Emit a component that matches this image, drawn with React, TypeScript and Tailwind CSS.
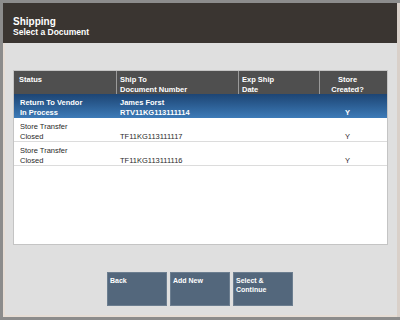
import React from 'react';

type Row = {
  status: [string, string];
  ship: [string, string];
  date: string;
  created: string;
};

const rows: Row[] = [
  { status: ['Return To Vendor', 'In Process'], ship: ['James Forst', 'RTV11KG113111114'], date: '', created: 'Y' },
  { status: ['Store Transfer', 'Closed'], ship: ['', 'TF11KG113111117'], date: '', created: 'Y' },
  { status: ['Store Transfer', 'Closed'], ship: ['', 'TF11KG113111116'], date: '', created: 'Y' },
];

const font = { fontFamily: '"Liberation Sans", Arial, sans-serif' };

function Cell({ lines, className = '' }: { lines: string[]; className?: string }) {
  return (
    <div className={`pt-[4px] leading-[10px] ${className}`}>
      {lines.map((l, i) => (
        <div key={i} className="h-[10px] whitespace-nowrap">
          {l}
        </div>
      ))}
    </div>
  );
}

function ActionButton({ label }: { label: string[] }) {
  return (
    <div className="w-[60px] h-[34px] bg-[#53677c] border border-[#6c7e90] px-[2px] pt-[3px] text-white text-[7px] font-bold leading-[9px]">
      {label.map((l, i) => (
        <div key={i}>{l}</div>
      ))}
    </div>
  );
}

export default function App() {
  return (
    <div className="w-[400px] h-[320px] bg-[#8c8c8c] pt-[3px] pl-[3px] pb-[3px] flex" style={font}>
      <div className="flex-1 flex flex-col bg-[#dfdfdf] border-r-[3px] border-[#d9d0c9]">
        <div className="h-[40px] bg-[#3a3531] pl-[10px] pt-[13px] text-white font-bold">
          <div className="text-[10px] leading-[11px]">Shipping</div>
          <div className="text-[8.5px] leading-[10px]">Select a Document</div>
        </div>

        <div className="flex-1 flex flex-col border-l-2 border-b-2 border-[#e6ddd5] pl-[8px] pr-[9px] pt-[27px]">
          <div className="h-[175px] bg-white border border-[#c4c4c4] flex flex-col text-[7.5px]">
            <div className="h-[23px] bg-[#4f4f4f] text-white font-bold flex shrink-0">
              <Cell lines={['Status']} className="w-[103px] pl-[5px] pt-[3px] border-r border-[#9a9a9a]" />
              <Cell lines={['Ship To', 'Document Number']} className="w-[122px] pl-[3px] pt-[3px] border-r border-[#9a9a9a]" />
              <Cell lines={['Exp Ship', 'Date']} className="w-[81px] pl-[3px] pt-[3px] border-r border-[#9a9a9a]" />
              <Cell lines={['Store', 'Created?']} className="flex-1 text-center pr-[12px] pt-[3px]" />
            </div>
            {rows.map((r, i) => {
              const selected = i === 0;
              return (
                <div
                  key={i}
                  className={`h-[24px] flex shrink-0 ${
                    selected
                      ? 'bg-gradient-to-b from-[#1d4574] to-[#3d7bb8] text-white font-bold'
                      : 'text-[#2a2a2a] border-b border-[#dcdcdc]'
                  }`}
                >
                  <Cell lines={r.status} className="w-[103px] pl-[6px]" />
                  <Cell lines={r.ship} className="w-[122px] pl-[3px]" />
                  <Cell lines={['', r.date]} className="w-[81px] pl-[3px]" />
                  <Cell lines={['', r.created]} className="flex-1 text-center pr-[12px]" />
                </div>
              );
            })}
          </div>

          <div className="flex justify-center gap-[3px] mt-[27px] pr-[1px]">
            <ActionButton label={['Back']} />
            <ActionButton label={['Add New']} />
            <ActionButton label={['Select &', 'Continue']} />
          </div>
        </div>
      </div>
    </div>
  );
}
